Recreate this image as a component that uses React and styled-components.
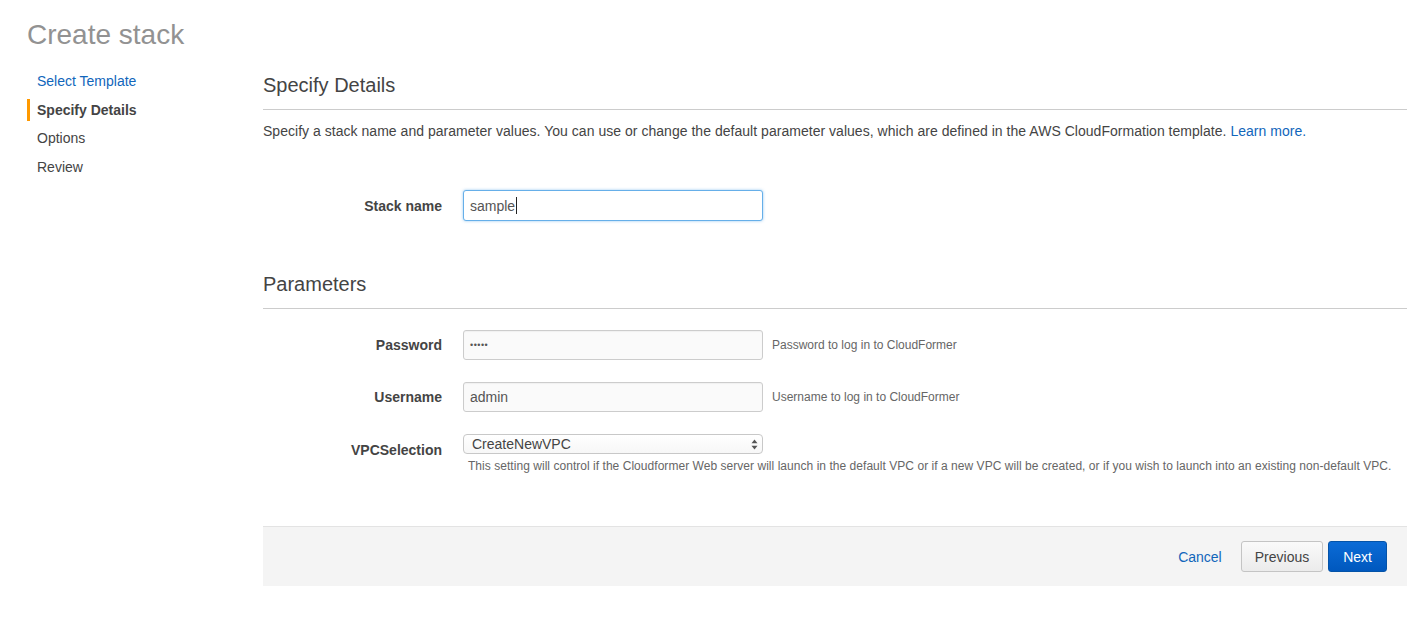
import React from 'react'
import styled, { createGlobalStyle } from 'styled-components'

const GlobalStyle = createGlobalStyle`
  body {
    margin: 0;
    background: #fff;
    font-family: "Liberation Sans", Arial, sans-serif;
    color: #444;
  }
`

const steps = [
  { label: 'Select Template', state: 'link' },
  { label: 'Specify Details', state: 'active' },
  { label: 'Options' },
  { label: 'Review' },
]

const params = [
  { name: 'Password', value: '•••••', help: 'Password to log in to CloudFormer', secret: true },
  { name: 'Username', value: 'admin', help: 'Username to log in to CloudFormer' },
]

const ArrowsIcon = () => (
  <svg width="7" height="11" viewBox="0 0 7 11">
    <path d="M3.5 0.5 L6.5 4.2 L0.5 4.2 Z" fill="#555" />
    <path d="M3.5 10.5 L6.5 6.8 L0.5 6.8 Z" fill="#555" />
  </svg>
)

const App = () => {
  return (
    <Page>
      <GlobalStyle />
      <PageTitle>Create stack</PageTitle>
      <Layout>
        <SideNav>
          {steps.map(s => (
            <Step key={s.label} state={s.state}>{s.label}</Step>
          ))}
        </SideNav>

        <Main>
          <SectionTitle>Specify Details</SectionTitle>
          <Intro>
            Specify a stack name and parameter values. You can use or change the default parameter values, which are defined in the AWS CloudFormation template. <Link>Learn more.</Link>
          </Intro>

          <StackRow>
            <Label>Stack name</Label>
            <TextBox focused>
              sample<Caret />
            </TextBox>
          </StackRow>

          <SectionTitle spaced>Parameters</SectionTitle>
          <Params>
            {params.map(p => (
              <Row key={p.name}>
                <Label>{p.name}</Label>
                <TextBox filled secret={p.secret}>{p.value}</TextBox>
                <Help>{p.help}</Help>
              </Row>
            ))}
            <Row top>
              <Label top>VPCSelection</Label>
              <SelectCell>
                <SelectBox>
                  CreateNewVPC
                  <ArrowsIcon />
                </SelectBox>
                <SubHelp>
                  This setting will control if the Cloudformer Web server will launch in the default VPC or if a new VPC will be created, or if you wish to launch into an existing non-default VPC.
                </SubHelp>
              </SelectCell>
            </Row>
          </Params>

          <Footer>
            <Link>Cancel</Link>
            <Buttons>
              <Button>Previous</Button>
              <Button primary>Next</Button>
            </Buttons>
          </Footer>
        </Main>
      </Layout>
    </Page>
  )
}

export default App

const Page = styled.div`
  padding: 18px 21px 40px 27px;
`

const PageTitle = styled.h1`
  margin: 0;
  font-size: 28px;
  font-weight: 400;
  line-height: 34px;
  color: #929292;
`

const Layout = styled.div`
  display: grid;
  grid-template-columns: 236px 1fr;
  margin-top: 18px;
`

const SideNav = styled.nav`
  display: flex;
  flex-direction: column;
  gap: 6px;
`

const Step = styled.div`
  font-size: 14px;
  line-height: 22.5px;
  padding-left: 7px;
  border-left: 3px solid ${p => (p.state === 'active' ? '#f90' : 'transparent')};
  font-weight: ${p => (p.state === 'active' ? 700 : 400)};
  color: ${p => (p.state === 'link' ? '#1166bb' : '#444')};
`

const Main = styled.div`
  display: flex;
  flex-direction: column;
`

const SectionTitle = styled.h2`
  margin: ${p => (p.spaced ? '48px' : '0')} 0 0;
  font-size: 20px;
  font-weight: 400;
  line-height: 28px;
  color: #444;
  padding: 1px 0 10px;
  border-bottom: 1px solid #ccc;
`

const Intro = styled.p`
  margin: 11px 0 0;
  font-size: 14px;
  line-height: 20px;
  letter-spacing: 0.03px;
  color: #444;
`

const Link = styled.a`
  color: #1166bb;
  font-size: 14px;
  cursor: pointer;
`

const Row = styled.div`
  display: grid;
  grid-template-columns: 179px 300px auto;
  column-gap: 21px;
  align-items: ${p => (p.top ? 'start' : 'center')};
  & > :nth-child(3) { margin-left: -12px; }
`

const StackRow = styled(Row)`
  margin-top: 49px;
`

const Params = styled.div`
  display: flex;
  flex-direction: column;
  gap: 22px;
  margin-top: 21px;
`

const Label = styled.label`
  text-align: right;
  font-size: 14px;
  font-weight: 700;
  color: #444;
  line-height: 20px;
  align-self: ${p => (p.top ? 'start' : 'center')};
  margin-top: ${p => (p.top ? '6px' : '0')};
`

const TextBox = styled.div`
  box-sizing: border-box;
  height: ${p => (p.focused ? '31px' : '30px')};
  display: flex;
  align-items: center;
  padding: 0 6px;
  border: 1px solid ${p => (p.focused ? '#66afe9' : '#ccc')};
  border-radius: 3px;
  background: ${p => (p.filled ? '#fafafa' : '#fff')};
  box-shadow: ${p => (p.focused ? '0 0 3px rgba(102,175,233,0.7)' : 'inset 0 1px 1px rgba(0,0,0,0.04)')};
  font-size: ${p => (p.secret ? '9px' : '14px')};
  letter-spacing: ${p => (p.secret ? '0.5px' : '0')};
  color: #555;
`

const Caret = styled.span`
  display: inline-block;
  width: 1px;
  height: 17px;
  background: #222;
  margin-left: 1px;
`

const Help = styled.span`
  font-size: 12px;
  color: #666;
`

const SelectCell = styled.div`
  display: flex;
  flex-direction: column;
  gap: 4px;
`

const SelectBox = styled.div`
  box-sizing: border-box;
  width: 300px;
  height: 20px;
  display: flex;
  align-items: center;
  justify-content: space-between;
  padding: 0 4px 0 8px;
  border: 1px solid #c8c8c8;
  border-radius: 4px;
  background: linear-gradient(#fff, #f7f7f7);
  font-size: 14px;
  color: #444;
`

const SubHelp = styled.div`
  padding-left: 5px;
  font-size: 12px;
  line-height: 16px;
  letter-spacing: 0.04px;
  color: #666;
  white-space: nowrap;
`

const Footer = styled.div`
  margin-top: 52px;
  height: 60px;
  box-sizing: border-box;
  display: flex;
  align-items: center;
  justify-content: flex-end;
  gap: 19px;
  padding-right: 20px;
  background: #f4f4f4;
  border-top: 1px solid #e3e3e3;
`

const Buttons = styled.div`
  display: flex;
  gap: 5px;
`

const Button = styled.button`
  height: 31px;
  padding: 0 ${p => (p.primary ? '14px' : '13px')};
  border-radius: 3px;
  font-family: inherit;
  font-size: 14px;
  cursor: pointer;
  color: ${p => (p.primary ? '#fff' : '#444')};
  border: 1px solid ${p => (p.primary ? '#0453a8' : '#c4c4c4')};
  background: ${p => (p.primary ? 'linear-gradient(#0b6bd6, #0058be)' : 'linear-gradient(#fafafa, #ebebeb)')};
`
